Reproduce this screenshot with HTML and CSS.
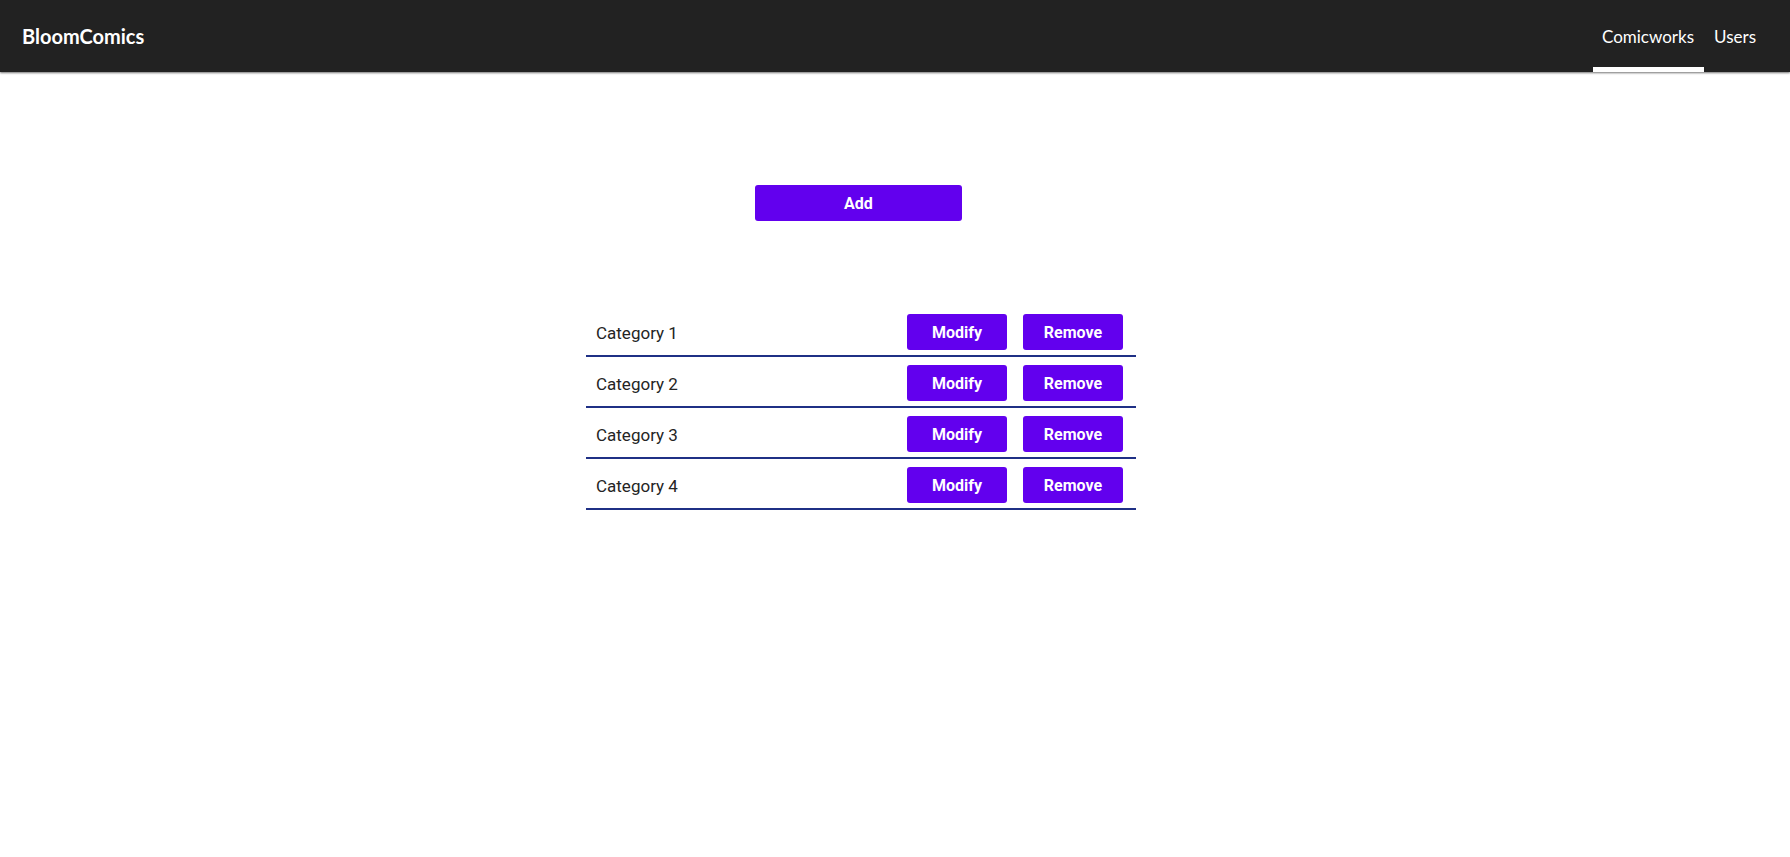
FILE: index.html
```html
<!DOCTYPE html>
<html>
<head>
<meta charset="utf-8">
<title>BloomComics</title>
<link rel="stylesheet" href="styles.css">
</head>
<body>
<header class="topbar">
  <div class="brand">BloomComics</div>
  <nav class="tabs">
    <a class="tab active">Comicworks</a>
    <a class="tab">Users</a>
  </nav>
</header>
<main class="content">
  <div class="add-wrap">
    <button class="btn btn-add">Add</button>
  </div>
  <ul class="cat-list">
    <li class="cat-row">
      <span class="cat-name">Category 1</span>
      <div class="actions"><button class="btn">Modify</button><button class="btn">Remove</button></div>
    </li>
    <li class="cat-row">
      <span class="cat-name">Category 2</span>
      <div class="actions"><button class="btn">Modify</button><button class="btn">Remove</button></div>
    </li>
    <li class="cat-row">
      <span class="cat-name">Category 3</span>
      <div class="actions"><button class="btn">Modify</button><button class="btn">Remove</button></div>
    </li>
    <li class="cat-row">
      <span class="cat-name">Category 4</span>
      <div class="actions"><button class="btn">Modify</button><button class="btn">Remove</button></div>
    </li>
  </ul>
</main>
</body>
</html>
```
FILE: styles.css
```css
* { box-sizing: border-box; }
html, body { margin: 0; padding: 0; background: #ffffff; }
body { font-family: Roboto, "Liberation Sans", Arial, sans-serif; }

.topbar {
  height: 72px;
  background: #222222;
  display: flex;
  align-items: stretch;
  justify-content: space-between;
  padding: 0 24px 0 22px;
  box-shadow: 0 1px 2px rgba(0,0,0,0.55);
  position: relative;
}
.brand {
  font-family: Lato, "Open Sans", sans-serif;
  font-weight: 700;
  font-size: 20px;
  color: #ffffff;
  display: flex;
  align-items: center;
  padding-bottom: 1px;
}
.tabs { display: flex; align-items: stretch; }
.tab {
  font-family: Lato, "Open Sans", sans-serif;
  font-size: 17px;
  color: #ffffff;
  display: flex;
  align-items: center;
  padding: 5px 10px 0 10px;
  border-bottom: 5px solid transparent;
  cursor: pointer;
}
.tab.active { border-bottom-color: #ffffff; padding-left: 9px; }

.content {
  margin-left: 586px;
  width: 550px;
  padding-top: 113px;
}
.add-wrap { padding-left: 169px; }
.btn {
  font-family: Roboto, "Liberation Sans", sans-serif;
  font-weight: 700;
  font-size: 16px;
  color: #ffffff;
  background: #6200ee;
  border: none;
  border-radius: 3px;
  height: 36px;
  width: 100px;
  padding: 0;
  cursor: pointer;
}
.btn-add { width: 207px; height: 36px; padding-top: 1px; }

.cat-list {
  list-style: none;
  margin: 85px 0 0 0;
  padding: 0;
}
.cat-row {
  display: flex;
  align-items: center;
  justify-content: space-between;
  padding: 8px 13px 5px 10px;
  border-bottom: 2px solid #1f3085;
}
.cat-name {
  font-size: 17px;
  color: #242424;
  padding-top: 2px;
}
.actions { display: flex; gap: 16px; }
```
